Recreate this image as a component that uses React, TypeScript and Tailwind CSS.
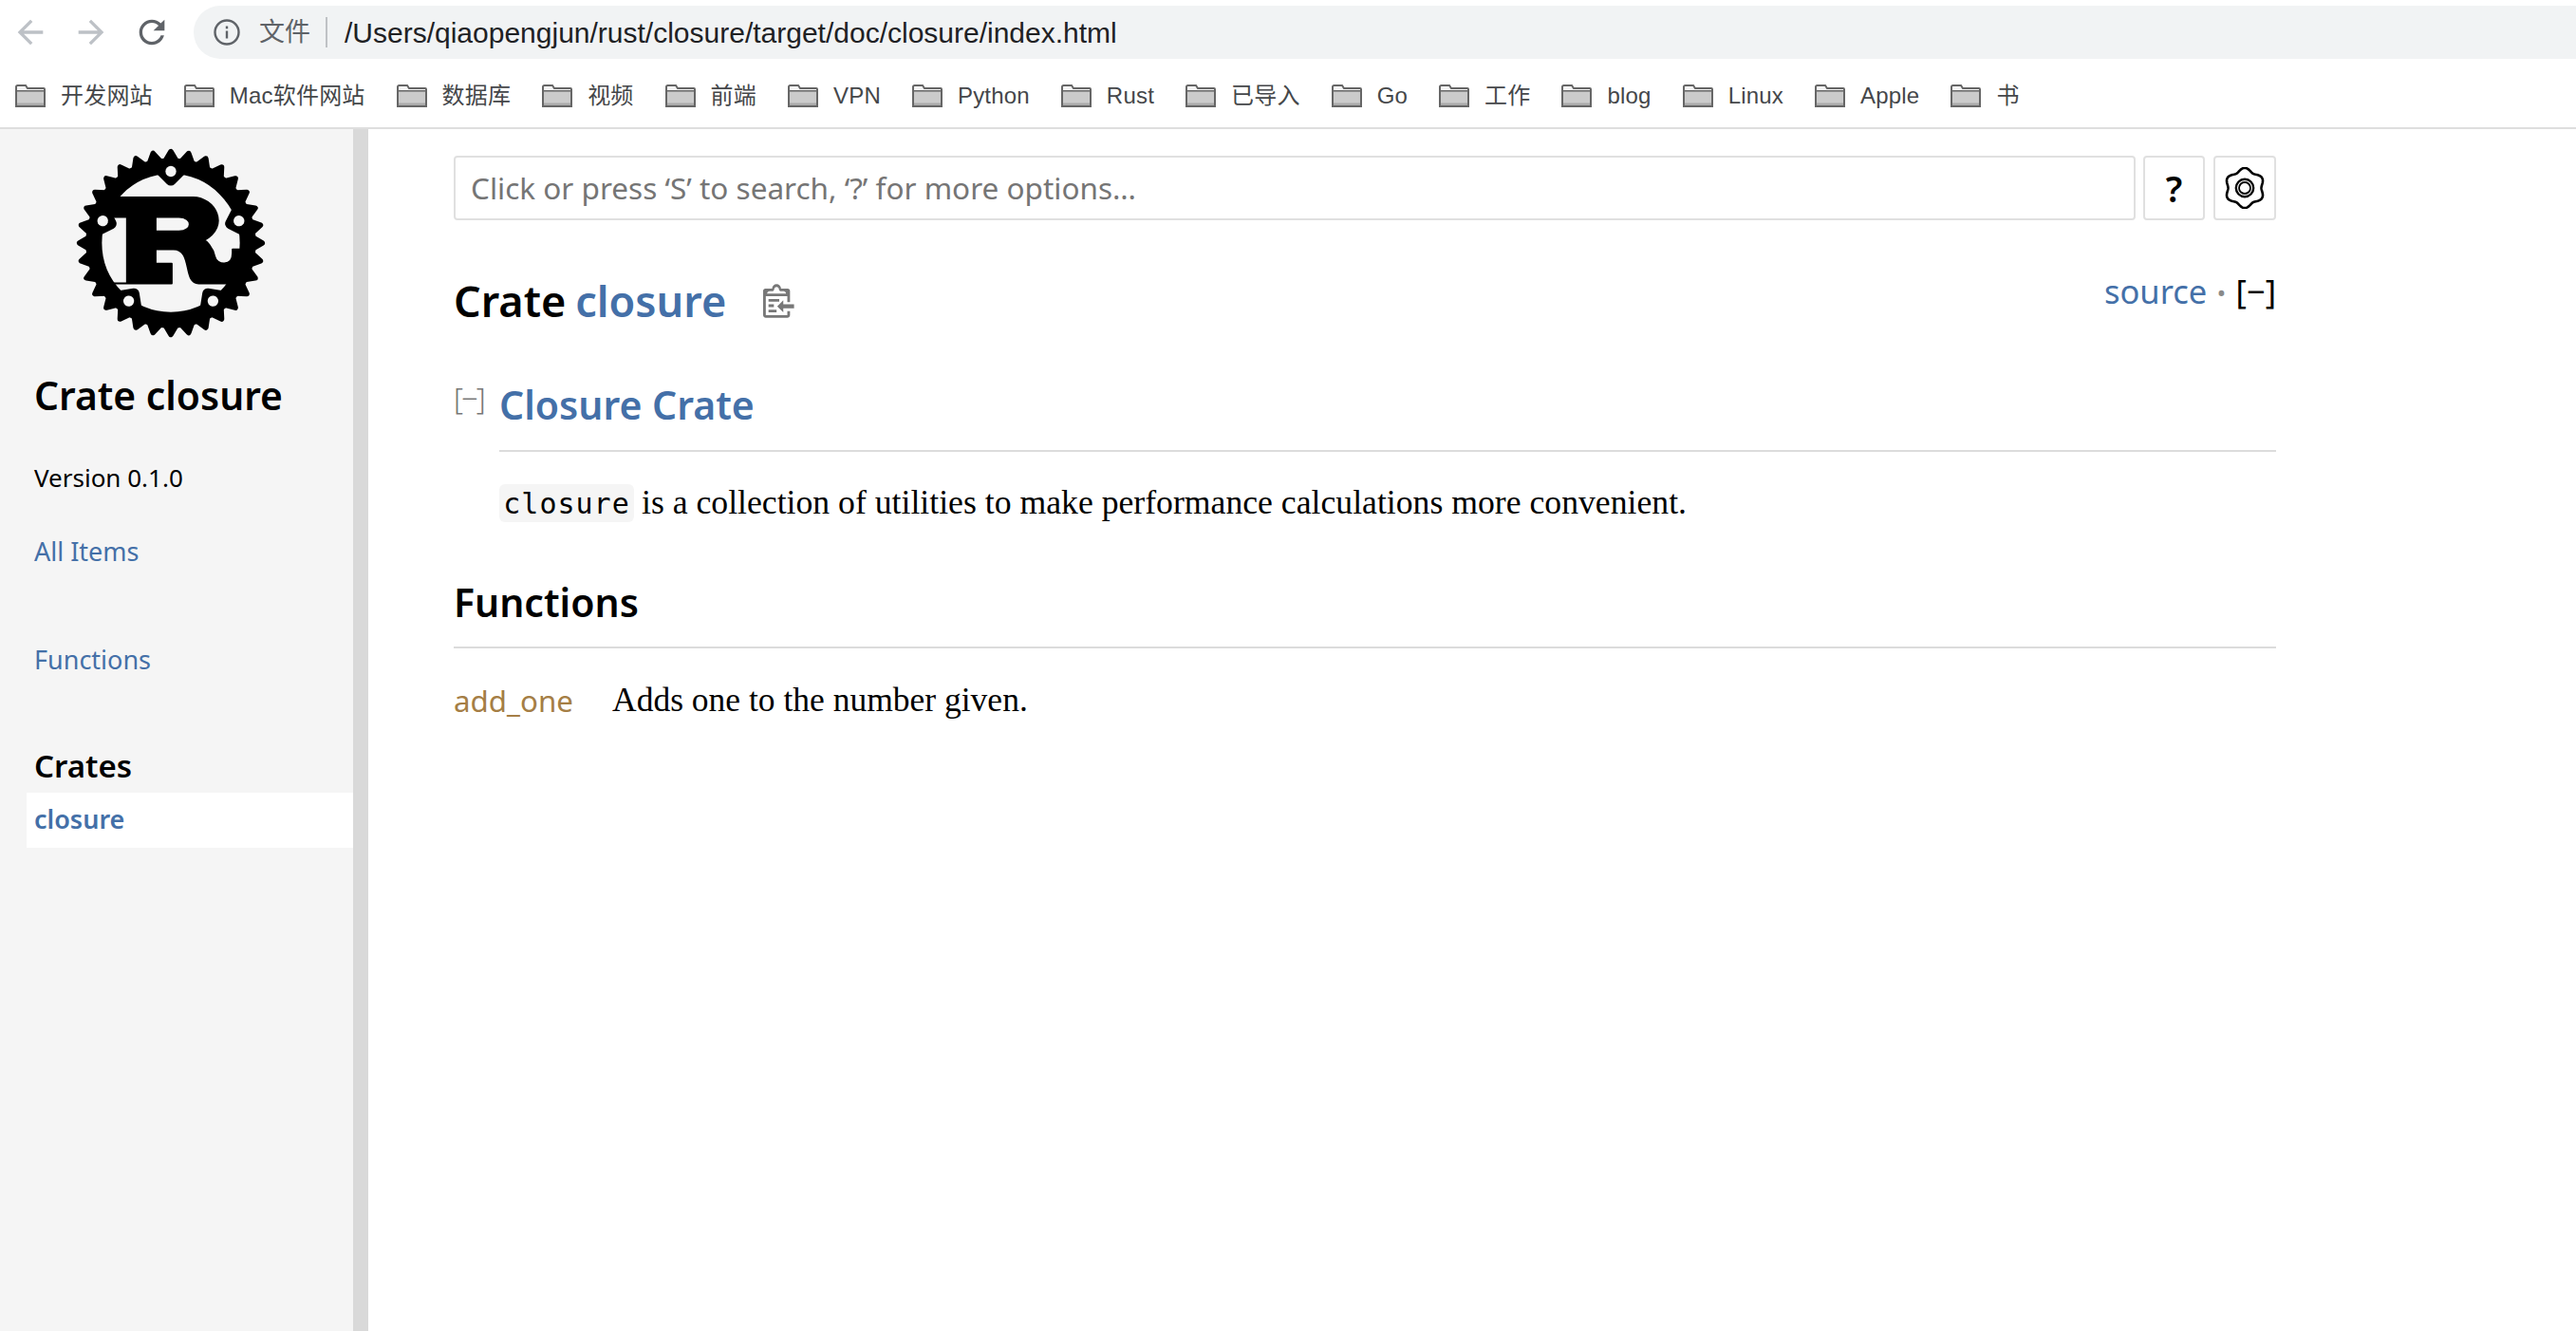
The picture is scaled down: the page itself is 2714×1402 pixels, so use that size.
const sans = "font-['Noto_Sans',sans-serif]";
const ui = "font-['Liberation_Sans','Noto_Sans_CJK_SC',sans-serif]";

const bookmarks = ["开发网站", "Mac软件网站", "数据库", "视频", "前端", "VPN", "Python", "Rust", "已导入", "Go", "工作", "blog", "Linux", "Apple", "书"];

function Folder() {
  return (
    <svg width="32" height="24" viewBox="0 0 32 24" className="shrink-0">
      <path d="M1 23V2.5C1 1.6 1.6 1 2.5 1H11l2 3h17c.6 0 1 .4 1 1v18z" fill="#f4f4f4" stroke="#666" strokeWidth="2" />
      <rect x="2" y="7" width="28" height="15" fill="#cbcbcb" />
      <rect x="2" y="6" width="28" height="1.5" fill="#666" />
      <rect x="2" y="19.5" width="28" height="2.5" fill="#aaa" />
    </svg>
  );
}

function MatIcon({ d, color }: { d: string; color: string }) {
  return (
    <svg width="40" height="40" viewBox="0 0 24 24" fill={color} className="shrink-0">
      <path d={d} />
    </svg>
  );
}

function RustLogo() {
  const cogs = Array.from({ length: 32 }, (_, i) => i * 11.25);
  const mounts = [0, 72, 144, 216, 288];
  return (
    <svg width="200" height="200" viewBox="0 0 106 106" className="block">
      <defs>
        <mask id="holes">
          <rect x="-60" y="-60" width="120" height="120" fill="white" />
          {mounts.map((r) => (
            <circle key={r} cy="-40" r="3" fill="black" transform={`rotate(${r})`} />
          ))}
        </mask>
      </defs>
      <g transform="translate(53,53)">
        <path
          transform="translate(0.5,0.5)"
          stroke="black"
          strokeWidth="1"
          strokeLinejoin="round"
          fillRule="evenodd"
          d="M -9,-15 H 4 C 12,-15 12,-7 4,-7 H -9 Z M -40,22 H 0 V 11 H -9 V 3 H 1 C 12,3 6,22 15,22 H 40 V 3 H 34 V 5 C 34,13 25,12 24,7 C 23,2 19,-2 18,-2 C 33,-10 24,-26 12,-26 H -35 V -15 H -25 V 22 H -40 Z"
        />
        <g mask="url(#holes)">
          <circle r="43" fill="none" stroke="black" strokeWidth="9" />
          {cogs.map((r) => (
            <polygon key={r} stroke="black" strokeWidth="3" strokeLinejoin="round" points="46,3 51,0 46,-3" transform={`rotate(${r})`} />
          ))}
          {mounts.map((r) => (
            <polygon key={r} stroke="black" strokeWidth="6" strokeLinejoin="round" points="-7,-42 0,-35 7,-42" transform={`rotate(${r})`} />
          ))}
        </g>
      </g>
    </svg>
  );
}

function Wheel() {
  const pts: string[] = [];
  for (let i = 0; i < 120; i++) {
    const t = (i / 120) * Math.PI * 2;
    const r = 19.3 + 1.8 * Math.cos(6 * t);
    const x = 22 + r * Math.sin(t);
    const y = 22 - r * Math.cos(t);
    pts.push(`${x.toFixed(2)},${y.toFixed(2)}`);
  }
  return (
    <svg width="44" height="44" viewBox="0 0 44 44" fill="none" stroke="black">
      <polygon points={pts.join(" ")} strokeWidth="2.6" strokeLinejoin="round" />
      <circle cx="22" cy="22" r="9.2" strokeWidth="2.4" />
      <circle cx="22" cy="22" r="6" strokeWidth="1.8" />
    </svg>
  );
}

function Clipboard() {
  return (
    <svg width="34" height="36" viewBox="0 0 24 25" fill="#777" className="block">
      <path d="M18 20h2v3c0 1-1 2-2 2H2c-.998 0-2-1-2-2V5c0-.911.755-1.667 1.667-1.667h5A3.323 3.323 0 0110 0a3.323 3.323 0 013.333 3.333h5C19.245 3.333 20 4.09 20 5v8.333h-2V9H2v14h16v-3zM3 7h14c0-.911-.793-1.667-1.75-1.667H13.5c-.957 0-1.75-.755-1.75-1.666C11.75 2.755 10.957 2 10 2s-1.75.755-1.75 1.667c0 .911-.793 1.666-1.75 1.666H4.75C3.793 5.333 3 6.09 3 7z" />
      <path d="M4 19h6v2H4zM12 11H4v2h8zM4 17h4v-2H4zM15 15v-3l-4.5 4.5L15 21v-3l8.027-.032L23 15z" />
    </svg>
  );
}

export default function App() {
  return (
    <div className="w-[2714px] h-[1402px] overflow-hidden bg-white flex flex-col text-black">
      <div className="h-[70px] flex pl-[12px] pt-[6px] shrink-0">
        <div className="flex gap-[24px] h-[56px] items-center mr-[24px]">
          <MatIcon color="#bdc1c6" d="M20 11H7.83l5.59-5.59L12 4l-8 8 8 8 1.41-1.41L7.83 13H20v-2z" />
          <MatIcon color="#bdc1c6" d="M12 4l-1.41 1.41L16.17 11H4v2h12.17l-5.58 5.59L12 20l8-8z" />
          <MatIcon color="#5f6368" d="M17.65 6.35C16.2 4.9 14.21 4 12 4c-4.42 0-7.99 3.58-7.99 8s3.57 8 7.99 8c3.73 0 6.84-2.55 7.73-6h-2.08c-.82 2.33-3.04 4-5.65 4-3.31 0-6-2.69-6-6s2.69-6 6-6c1.66 0 3.14.69 4.22 1.78L13 11h7V4l-2.35 2.35z" />
        </div>
        <div className={`flex-1 h-[56px] bg-[#f1f3f4] rounded-l-[28px] flex items-center pl-[21px] ${ui}`}>
          <svg width="28" height="28" viewBox="0 0 28 28" fill="none" stroke="#5f6368" strokeWidth="2.4" className="shrink-0">
            <circle cx="14" cy="14" r="12.5" />
            <path d="M14 12.5v8" />
            <path d="M14 7.5v2.8" />
          </svg>
          <span className="ml-[20px] text-[27px] text-[#5f6368]">文件</span>
          <span className="ml-[16px] w-[2px] h-[32px] bg-[#bfc2c5]" />
          <span className="ml-[18px] text-[30px] text-[#202124]">/Users/qiaopengjun/rust/closure/target/doc/closure/index.html</span>
        </div>
      </div>

      <div className={`h-[66px] shrink-0 border-b-2 border-[#dedede] flex items-center gap-[33px] pl-[16px] pb-[2px] ${ui}`}>
        {bookmarks.map((b) => (
          <div key={b} className="flex items-center gap-[16px]">
            <Folder />
            <span className="text-[24px] tracking-[0.2px] text-[#45474a] whitespace-nowrap">{b}</span>
          </div>
        ))}
      </div>

      <div className="flex-1 flex min-h-0">
        <aside className={`w-[372px] bg-[#f5f5f5] shrink-0 ${sans}`}>
          <div className="pt-[20px] pl-[80px]">
            <RustLogo />
          </div>
          <h2 className="mt-[36px] ml-[36px] h-[50px] flex items-center text-[40.8px] font-semibold whitespace-nowrap">Crate closure</h2>
          <p className="mt-[41px] ml-[36px] h-[40px] flex items-center text-[26px]">Version 0.1.0</p>
          <a className="mt-[38px] ml-[36px] h-[40px] flex items-center text-[27px] text-[#4470a8]">All Items</a>
          <a className="mt-[74px] ml-[36px] h-[40px] flex items-center text-[27px] text-[#4470a8]">Functions</a>
          <h3 className="mt-[69px] ml-[36px] h-[46px] flex items-center text-[33px] font-semibold">Crates</h3>
          <a className="mt-[5px] ml-[28px] pl-[8px] h-[58px] bg-white flex items-center text-[27px] font-semibold text-[#4470a8] pb-[2px]">closure</a>
        </aside>
        <div className="w-[16px] bg-[#d9d9d9] shrink-0" />

        <main className={`w-[1920px] ml-[90px] ${sans}`}>
          <div className="mt-[28px] h-[68px] flex">
            <div className="flex-1 border-2 border-[#e0e0e0] rounded-[4px] flex items-center pl-[16px] text-[31.5px] text-[#757575]">
              Click or press ‘S’ to search, ‘?’ for more options…
            </div>
            <div className="ml-[8px] w-[65px] border-2 border-[#e0e0e0] rounded-[4px] flex items-center justify-center text-[38px] font-semibold">?</div>
            <div className="ml-[9px] w-[66px] border-2 border-[#e0e0e0] rounded-[4px] flex items-center justify-center">
              <Wheel />
            </div>
          </div>

          <div className="mt-[55px] h-[60px] flex items-center justify-between">
            <h1 className="flex items-center text-[45px] font-semibold">
              <span>Crate</span>
              <span className="ml-[10px] text-[#4470a8]">closure</span>
              <span className="ml-[39px]">
                <Clipboard />
              </span>
            </h1>
            <div className="flex items-center self-start -mt-[6px] text-[34.5px]">
              <span className="text-[#4470a8]">source</span>
              <span className="mx-[9px] text-[46px] leading-none text-[#8a8a8a]">·</span>
              <span>[−]</span>
            </div>
          </div>

          <div className="mt-[49px] flex">
            <div className="w-[48px] pt-[6px] text-[31px] font-light tracking-[-2px] text-[#777] leading-[34px]">[−]</div>
            <h2 className="flex-1 h-[80px] border-b-2 border-[#dcdcdc] pb-[16px] flex items-center text-[41px] font-semibold text-[#4470a8]">Closure Crate</h2>
          </div>

          <p className="mt-[34px] ml-[48px] h-[40px] flex items-center font-['Liberation_Serif',serif] text-[35.7px]">
            <code className="bg-[#f5f5f5] rounded-[6px] h-[40px] w-[142px] flex items-center justify-center font-['DejaVu_Sans_Mono',monospace] text-[30px] tracking-[1px]">closure</code>
            <span className="ml-[8px]">is a collection of utilities to make performance calculations more convenient.</span>
          </p>

          <h2 className="mt-[43px] h-[90px] border-b-2 border-[#dcdcdc] pb-[5px] flex items-center text-[41px] font-semibold">Functions</h2>

          <div className="mt-[25px] h-[60px] flex items-center">
            <a className="w-[167px] text-[31.3px] text-[#a57e45]">add_one</a>
            <span className="font-['Liberation_Serif',serif] text-[35.5px]">Adds one to the number given.</span>
          </div>
        </main>
      </div>
    </div>
  );
}
